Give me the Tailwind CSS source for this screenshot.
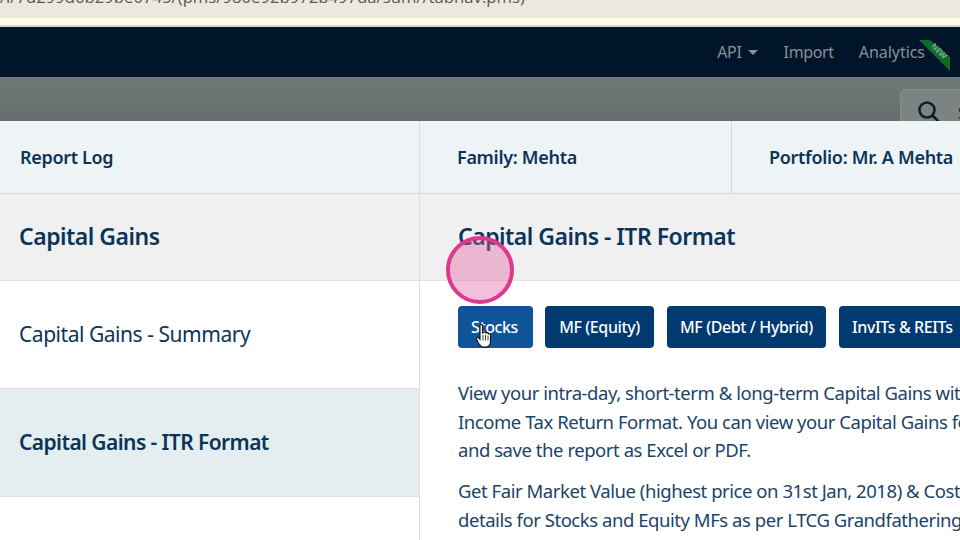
<!DOCTYPE html>
<html><head><meta charset="utf-8"><script src="https://cdn.jsdelivr.net/npm/@tailwindcss/browser@4"></script></head>
<body class="w-[960px] h-[540px] overflow-hidden relative bg-white font-['Noto_Sans',sans-serif] text-[#0b3558]">
<div class="h-[18px] bg-[#ebe9dd] overflow-hidden whitespace-nowrap text-[16.7px] leading-[12px] text-[#5a5a50] font-['Open_Sans',sans-serif]"><span class="block -mt-[9px]">/i/7d299d6b29be0745/(pms/980e92b972b497da/sum//tabnav.pms)</span></div>
<div class="h-[7px] bg-[#fdf9eb]"></div>
<div class="h-[2px] bg-[#d8d6c6]"></div>
<div class="h-[50px] bg-[#00152a] flex items-center justify-end text-[16px] text-[#8a9097] tracking-[-0.05px] relative overflow-hidden">
  <span class="flex items-center gap-[6px] tracking-[-0.3px]">API <span class="w-0 h-0 border-x-[5px] border-x-transparent border-t-[5px] border-t-[#8a9097]"></span></span>
  <span class="ml-[26px] tracking-[-0.35px]">Import</span>
  <span class="ml-[25px] mr-[35px]">Analytics</span>
  <svg class="absolute left-[919px] top-[13px]" width="32" height="32" viewBox="0 0 32 32"><path d="M0 0H11L31 17V31Z" fill="#0f6b2c"/><text x="18" y="13" transform="rotate(45 18 13)" text-anchor="middle" font-size="8" font-weight="700" fill="#7fa98a" font-family="Noto Sans">NEW</text></svg>
</div>
<div class="h-[44px] bg-gradient-to-b from-[#707977] to-[#656e6c] relative overflow-hidden">
  <div class="absolute left-[900px] top-[12px] w-[80px] h-[50px] rounded-[6px] bg-[#7c8482] border border-[#868e8c] pl-[16px] pt-[10px] flex gap-[15px] text-[#0a1e30] text-[16px]">
    <svg width="26" height="26" viewBox="0 0 26 26" fill="none" stroke="#0a1e30" stroke-width="2.6"><circle cx="10" cy="10" r="7.5"/><path d="M15.5 15.5L24 24"/></svg>
    <span class="leading-[26px]">S</span>
  </div>
</div>
<div class="grid grid-cols-[420px_1fr]">
  <div class="border-r border-[#dcdfe1]">
    <div class="h-[73px] bg-[#eef3f6] border-b border-[#d4d8da] flex items-center pl-[20px] text-[18px] font-semibold tracking-[-0.33px]">Report Log</div>
    <div class="h-[87px] bg-[#f0f0f0] border-b border-[#e2e2e2] flex items-center pl-[19px] pb-[2px] text-[23px] font-semibold tracking-[-0.5px]">Capital Gains</div>
    <div class="h-[108px] bg-white border-b border-[#dfe3e5] flex items-center pl-[19px] text-[21px] tracking-[-0.46px]">Capital Gains - Summary</div>
    <div class="h-[108px] bg-[#e4edf0] border-b border-[#dfe3e5] flex items-center pl-[19px] text-[21px] font-semibold tracking-[-0.58px]">Capital Gains - ITR Format</div>
    <div class="h-[60px]"></div>
  </div>
  <div class="overflow-hidden whitespace-nowrap">
    <div class="h-[73px] bg-[#eef3f6] border-b border-[#d4d8da] flex items-stretch text-[18px] font-semibold tracking-[-0.3px]">
      <div class="w-[312px] border-r border-[#d4d8da] flex items-center pl-[37px]">Family: Mehta</div>
      <div class="flex items-center pl-[37px]">Portfolio: Mr. A Mehta</div>
    </div>
    <div class="h-[87px] bg-[#f0f0f0] border-b border-[#e2e2e2] flex items-center pl-[38px] pb-[2px] text-[23px] font-semibold tracking-[-0.5px]">Capital Gains - ITR Format</div>
    <div class="pl-[38px] pt-[25px]">
      <div class="flex gap-[12px] text-[16px] font-medium tracking-[-0.4px] text-white">
        <div class="h-[42px] w-[75px] shrink-0 rounded-[4px] bg-[#0f5499] flex items-center justify-center pr-[2px]">Stocks</div>
        <div class="h-[42px] w-[109px] shrink-0 rounded-[4px] bg-[#003a70] flex items-center justify-center">MF (Equity)</div>
        <div class="h-[42px] w-[159px] ml-[1px] shrink-0 rounded-[4px] bg-[#003a70] flex items-center justify-center">MF (Debt / Hybrid)</div>
        <div class="h-[42px] w-[140px] ml-[1px] shrink-0 rounded-[4px] bg-[#003a70] flex items-center pl-[13px]">InvITs &amp; REITs</div>
      </div>
      <div class="mt-[31px] text-[18.5px] leading-[28.5px] tracking-[-0.45px] text-[#1a4468]">
        <p>View your intra-day, short-term &amp; long-term Capital Gains with</p>
        <p>Income Tax Return Format. You can view your Capital Gains for</p>
        <p>and save the report as Excel or PDF.</p>
        <p class="mt-[12px]">Get Fair Market Value (highest price on 31st Jan, 2018) &amp; Cost</p>
        <p class="mt-[1px]">details for Stocks and Equity MFs as per LTCG Grandfathering</p>
      </div>
    </div>
  </div>
</div>
<div class="absolute left-[446px] top-[236px] w-[68px] h-[68px] rounded-full bg-[#e0609f]/40 border-[4px] border-[#db3a8e]"></div>
<svg class="absolute left-[475px] top-[323px]" width="18" height="26" viewBox="0 0 18 26"><path d="M5 2.5C5 1 7.5 1 7.5 2.5V10L9 9.5C9.5 8.5 11 8.7 11.2 10C11.7 9.3 13.2 9.5 13.4 10.8C14 10.3 15.5 10.7 15.5 12V18C15.5 21 14 24 11 24H8C6 24 5 22 3.5 20L1.5 16C1 14.5 2.8 13.7 3.7 15L5 16.5Z" fill="#fff" stroke="#111" stroke-width="1.1"/><path d="M8 12V17.5M10.5 12V17.5M13 12.5V17.5" stroke="#111" stroke-width=".8"/></svg>
</body></html>
